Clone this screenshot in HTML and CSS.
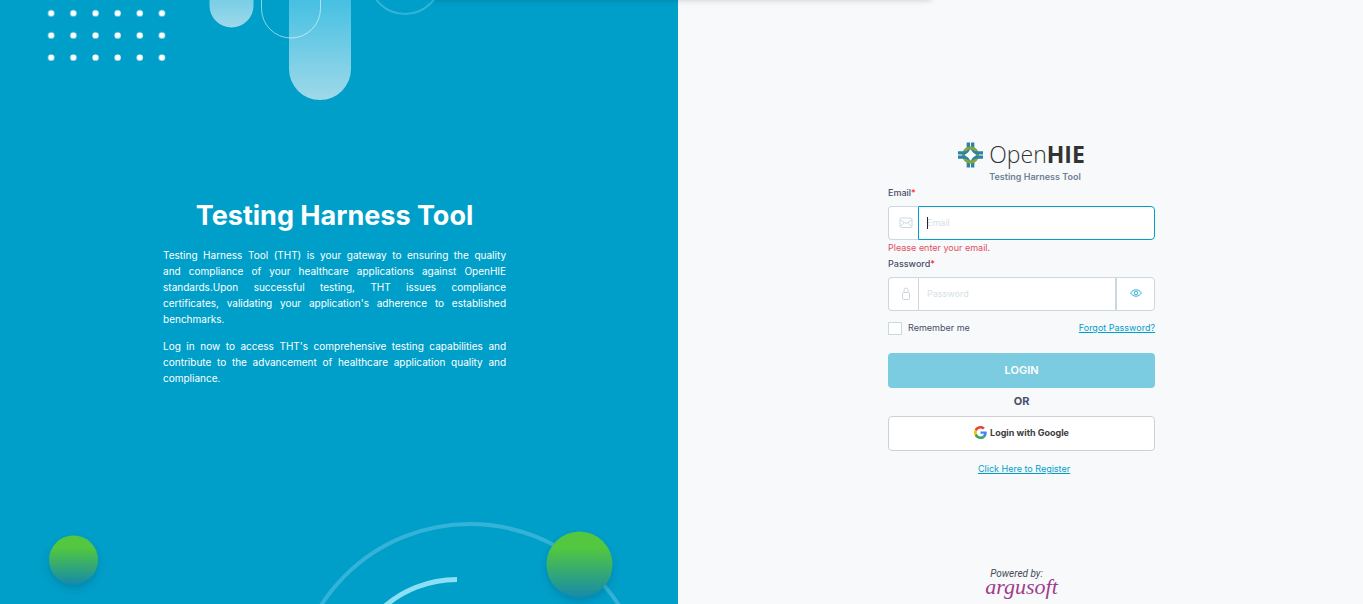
FILE: index.html
```html
<!DOCTYPE html>
<html lang="en">
<head>
<meta charset="utf-8">
<meta name="viewport" content="width=device-width, initial-scale=1">
<title>Testing Harness Tool - Login</title>
<link rel="stylesheet" href="styles.css">
</head>
<body>
<div class="toast-edge"></div>
<main class="page">
  <section class="intro">
    <svg class="decor decor-top" width="450" height="110" viewBox="0 0 450 110" aria-hidden="true">
      <defs>
        <linearGradient id="pill" x1="0" y1="0" x2="0" y2="1"><stop offset="0" stop-color="#46c0e2"/><stop offset="1" stop-color="#9fd9e9"/></linearGradient>
        <pattern id="dots" x="40" y="2" width="22.15" height="22.15" patternUnits="userSpaceOnUse"><circle cx="11.2" cy="11.2" r="3.1" fill="#fff"/></pattern>
      </defs>
      <rect x="40" y="2" width="132.9" height="66.4" fill="url(#dots)"/>
      <path d="M209.500-35V5.500a22 22 0 0 0 44 0V-35Z" fill="url(#pill)"/>
      <path d="M289 0V69a31 31 0 0 0 62 0V0Z" fill="url(#pill)"/>
      <path d="M261.500-5V8.500a29.500 29.500 0 0 0 59 0V-5" fill="none" stroke="#fff" stroke-opacity=".55"/>
      <circle cx="405" cy="-22" r="36" fill="none" stroke="#33b3d7" stroke-width="2"/>
    </svg>
    <svg class="decor decor-bottom" width="640" height="90" viewBox="0 514 640 90" aria-hidden="true">
      <defs>
        <linearGradient id="ball" x1="0" y1="0" x2="0" y2="1"><stop offset=".25" stop-color="#52c73f"/><stop offset="1" stop-color="#168aaa"/></linearGradient>
        <filter id="shade" x="-40%" y="-40%" width="180%" height="180%"><feDropShadow dx="0" dy="4" stdDeviation="4" flood-color="#003c5a" flood-opacity=".25"/></filter>
      </defs>
      <circle cx="470" cy="701" r="177" fill="none" stroke="#33b3d7" stroke-width="4"/>
      <path d="M457 579.500A111 111 0 0 0 346 690.500" fill="none" stroke="#8be0f5" stroke-width="5"/>
      <circle cx="73.500" cy="560" r="24.500" fill="url(#ball)" filter="url(#shade)"/>
      <circle cx="579.500" cy="564.500" r="33" fill="url(#ball)" filter="url(#shade)"/>
    </svg>
    <div class="intro-text">
      <h1>Testing Harness Tool</h1>
      <p>Testing Harness Tool (THT) is your gateway to ensuring the quality and&nbsp;compliance of your healthcare applications against OpenHIE standards.Upon successful testing, THT issues compliance certificates,&nbsp;validating your application's adherence to established benchmarks.</p>
      <p>Log in now to access THT's comprehensive testing capabilities and contribute to the advancement of healthcare application quality and compliance.</p>
    </div>
  </section>

  <section class="panel">
    <form class="login" novalidate>
      <div class="brand">
        <svg class="brand-mark" width="25" height="26" viewBox="0 0 26 26" aria-hidden="true">
          <path d="M9 0h3.500v7H9zM13.500 0H17v7h-3.500zM9 19h3.500v7H9zM13.500 19H17v7h-3.500z" fill="#2c83a6"/>
          <circle cx="13" cy="13" r="7.500" fill="#2c83a6" stroke="#86a83a" stroke-width="3"/>
          <path d="M0 9h8l2 1-3 2.500H0zM0 17h8l2-1-3-2.500H0zM26 9h-8l-2 1 3 2.500h7zM26 17h-8l-2-1 3-2.500h7z" fill="#2c83a6"/>
          <path d="M13 7.500 15 10.500 18.500 13 15 15.500 13 18.500 11 15.500 7.500 13 11 10.500Z" fill="#fff" stroke="#fff"/>
        </svg>
        <div class="brand-name">Open<b>HIE</b></div>
        <div class="brand-sub">Testing Harness Tool</div>
      </div>

      <label class="label" for="email">Email<span class="req">*</span></label>
      <div class="field">
        <span class="addon">
          <svg width="14" height="12" viewBox="0 0 14 12" fill="none" stroke="#cbd8dc" aria-hidden="true"><rect x="1" y="1" width="12" height="9.500" rx="1.500"/><path d="M1.500 3 7 6.500 12.500 3M1.500 9.500 5 6M12.500 9.500 9 6"/></svg>
        </span>
        <input class="input input-active" id="email" type="email" placeholder="Email">
        <span class="caret"></span>
      </div>
      <div class="error">Please enter your email.</div>

      <label class="label" for="password">Password<span class="req">*</span></label>
      <div class="field">
        <span class="addon">
          <svg width="10" height="14" viewBox="0 0 10 14" fill="none" stroke="#cbd8dc" aria-hidden="true"><rect x="1.500" y="5.500" width="7" height="7" rx="1"/><path d="M3 5.500V3a2 2 0 0 1 4 0v2.500"/></svg>
        </span>
        <input class="input" id="password" type="password" placeholder="Password">
        <button class="reveal" type="button" aria-label="Show password">
          <svg width="12" height="8" viewBox="0 0 12 8" fill="none" stroke="#35b2d6" aria-hidden="true"><path d="M.600 4C3.200-.300 8.800-.300 11.400 4 8.800 8.300 3.200 8.300.600 4Z"/><circle cx="6" cy="4" r="1.800"/></svg>
        </button>
      </div>

      <div class="options">
        <label class="remember" for="remember"><input id="remember" type="checkbox">Remember me</label>
        <a class="forgot" href="#">Forgot Password?</a>
      </div>
      <button class="btn btn-login" type="submit">LOGIN</button>
      <div class="or">OR</div>
      <button class="btn btn-google" type="button">
        <svg width="13" height="13" viewBox="0 0 48 48" aria-hidden="true"><path fill="#EA4335" d="M24 9.500c3.540 0 6.710 1.220 9.210 3.600l6.850-6.850C35.900 2.380 30.470 0 24 0 14.620 0 6.510 5.380 2.560 13.220l7.980 6.190C12.430 13.720 17.740 9.500 24 9.500z"/><path fill="#4285F4" d="M46.980 24.550c0-1.570-.15-3.090-.38-4.550H24v9.020h12.940c-.58 2.960-2.260 5.480-4.780 7.180l7.730 6c4.510-4.180 7.090-10.360 7.090-17.650z"/><path fill="#FBBC05" d="M10.530 28.590c-.48-1.450-.76-2.990-.76-4.590s.27-3.140.76-4.590l-7.980-6.190C.92 16.460 0 20.120 0 24s.92 7.540 2.560 10.780l7.970-6.190z"/><path fill="#34A853" d="M24 48c6.480 0 11.930-2.130 15.890-5.810l-7.730-6c-2.150 1.450-4.920 2.300-8.160 2.300-6.260 0-11.570-4.220-13.470-9.910l-7.980 6.190C6.510 42.620 14.620 48 24 48z"/></svg>
        Login with Google
      </button>
      <a class="register" href="#">Click Here to Register</a>
    </form>
    <footer class="powered">
      <div class="powered-by">Powered by:</div>
      <div class="vendor">argusoft</div>
    </footer>
  </section>
</main>
</body>
</html>
```
FILE: styles.css
```css
* { box-sizing: border-box; }
body { margin: 0; font-family: Inter, "Liberation Sans", sans-serif; font-size: 9px; line-height: 14px; color: #4a4e69; background: #f8f9fb; }
.page { display: flex; min-height: 100vh; }
.toast-edge { position: absolute; z-index: 2; left: 50%; top: -10px; width: 498px; height: 10px; transform: translateX(-50%); box-shadow: 0 0 6px rgba(0, 0, 0, .2); }

.intro { position: relative; flex: 0 0 49.75%; display: flex; align-items: center; justify-content: center; padding-right: 9px; background: #009fc9; color: #fff; overflow: hidden; }
.decor { position: absolute; left: 0; }
.decor-top { top: 0; }
.decor-bottom { bottom: 0; }
.intro-text { position: relative; width: 343px; padding-bottom: 8px; font-size: 10px; line-height: 16px; text-align: justify; }
.intro-text h1 { margin: 0 0 14px; font-size: 27px; line-height: 34px; font-weight: 700; text-align: center; }
.intro-text p { margin: 0 0 11px; }

.panel { flex: 1; display: grid; grid-template-rows: 1fr auto 1fr; justify-items: center; padding: 13px 0 0 2px; }
.login { grid-row: 2; width: 267px; display: flex; flex-direction: column; }

.brand { align-self: center; display: grid; grid-template-columns: 25px auto; column-gap: 6px; margin-bottom: 2px; }
.brand-mark { margin-top: 1px; }
.brand-name { font-family: "Open Sans", sans-serif; font-weight: 300; font-size: 23px; line-height: 27px; color: #333; }
.brand-name b { font-weight: 700; }
.brand-sub { grid-column: 2; margin-top: 2px; font-weight: 600; color: #708096; }

.label { font-weight: 500; margin-bottom: 6px; }
.req { color: #f22; }
.field { position: relative; display: flex; height: 34px; }
.addon { display: flex; align-items: center; justify-content: center; width: 30px; padding-left: 4px; background: #fff; border: 1px solid #cbd8dc; border-right: 0; border-radius: 4px 0 0 4px; }
.input { flex: 1; min-width: 0; padding: 0 8px; font: inherit; color: #4a4e69; background: #fff; border: 1px solid #cbd8dc; border-radius: 0; outline: 0; }
.input::placeholder { color: #d5e1e5; opacity: 1; }
.input-active { border-color: #009fc9; border-radius: 0 4px 4px 0; }
.caret { position: absolute; left: 39px; top: 11px; width: 1px; height: 12px; background: #223; }
.reveal { display: flex; align-items: center; justify-content: center; width: 39px; padding: 0 0 2px; background: #fff; border: 1px solid #cbd8dc; border-radius: 0 4px 4px 0; }
.error { margin: 1px 0 2px; color: #e04f5f; }

.options { display: flex; justify-content: space-between; margin: 10px 0 18px; }
.remember { display: flex; align-items: center; gap: 6px; }
.remember input { appearance: none; width: 14px; height: 13px; margin: 0; background: #fff; border: 1px solid #cbd8dc; }
.forgot, .register { color: #009fc9; text-decoration: underline; }
.btn { display: flex; align-items: center; justify-content: center; height: 35px; padding: 0 0 2px; font: inherit; font-weight: 700; border-radius: 4px; }
.btn-login { border: 0; background: #7bcce0; color: #fff; font-size: 11px; font-weight: 600; }
.or { margin: 6px 0 8px; font-size: 11px; font-weight: 700; text-align: center; }
.btn-google { gap: 3px; color: #3d3d3d; background: #fff; border: 1px solid #cdd0d4; }
.register { align-self: center; margin: 11px 0 0 5px; }

.powered { grid-row: 3; align-self: end; padding-bottom: 10px; text-align: center; }
.powered-by { padding-right: 10px; font-family: Roboto, sans-serif; font-style: italic; font-size: 10px; line-height: 12px; color: #444b55; }
.vendor { font-family: "Liberation Serif", serif; font-style: italic; font-size: 22px; line-height: 14px; color: #a03c8c; }
```
